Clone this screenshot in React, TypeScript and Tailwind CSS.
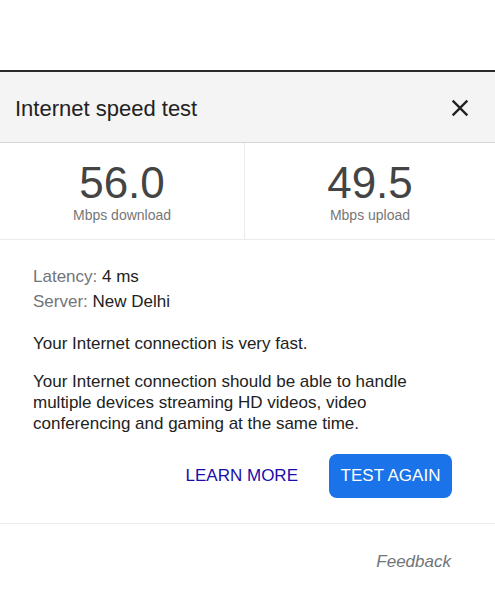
export default function App() {
  const font = { fontFamily: '"Liberation Sans", Arial, sans-serif' };

  return (
    <div className="min-h-screen bg-white" style={font}>
      <div className="h-[70px]" />
      <div className="border-t-2 border-[#2b2b2b]">
        {/* header */}
        <div className="h-[71px] bg-[#f4f4f4] border-b border-[#d6d6d6] flex items-center justify-between pl-[15px] pr-[21px] pt-[2px]">
          <h2 className="text-[22px] text-[#222]">Internet speed test</h2>
          <svg width="28" height="28" viewBox="0 0 24 24" fill="#222">
            <path d="M19 6.41L17.59 5 12 10.59 6.41 5 5 6.41 10.59 12 5 17.59 6.41 19 12 13.41 17.59 19 19 17.59 13.41 12z" />
          </svg>
        </div>

        {/* speeds */}
        <div className="grid grid-cols-[245px_1fr] h-[97px] border-b border-[#ebebeb]">
          <div className="flex flex-col items-center justify-center border-r border-[#ebebeb] pt-[1px]">
            <div className="text-[44px] leading-[44px] text-[#444]">56.0</div>
            <div className="text-[14px] leading-[16px] text-[#777] mt-[2px]">Mbps download</div>
          </div>
          <div className="flex flex-col items-center justify-center pt-[1px]">
            <div className="text-[44px] leading-[44px] text-[#444]">49.5</div>
            <div className="text-[14px] leading-[16px] text-[#777] mt-[2px]">Mbps upload</div>
          </div>
        </div>

        {/* details */}
        <div className="pl-[33px] pr-[43px] pt-[25px] pb-[25px] border-b border-[#ebebeb] text-[17px] text-[#222]">
          <div className="leading-[24px]">
            <span className="text-[#70757a]">Latency:</span> 4 ms
          </div>
          <div className="leading-[24px] mt-[1px]">
            <span className="text-[#70757a]">Server:</span> New Delhi
          </div>
          <p className="leading-[21px] mt-[19px]">Your Internet connection is very fast.</p>
          <p className="leading-[21px] mt-[17px]">
            Your Internet connection should be able to handle multiple devices streaming HD videos, video conferencing and gaming at the same time.
          </p>
          <div className="flex justify-end items-center mt-[20px]">
            <button className="text-[17px] text-[#1a0dab] mr-[31px]">LEARN MORE</button>
            <button className="h-[44px] w-[123px] rounded-[8px] bg-[#1a73e8] text-white text-[17px]">
              TEST AGAIN
            </button>
          </div>
        </div>

        {/* footer */}
        <div className="flex justify-end pr-[44px] pt-[27px]">
          <span className="italic text-[17px] leading-[21px] text-[#70757a]">Feedback</span>
        </div>
      </div>
    </div>
  );
}
